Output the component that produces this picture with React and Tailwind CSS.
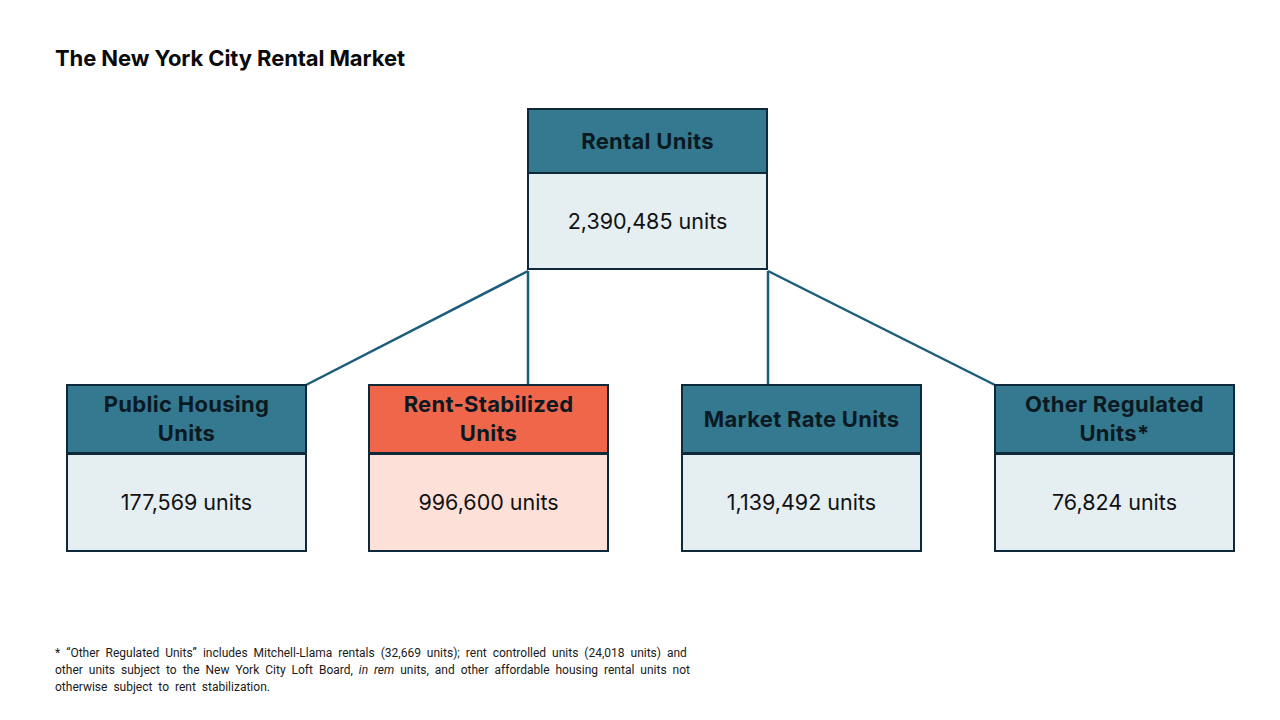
import React from 'react';

const teal = 'bg-[#34798f]';

const TopBox = () => (
  <div className="ml-[527px] w-[241px] border-2 border-[#0e2a3a]">
    <div className={`${teal} h-[62px] flex items-center justify-center text-[22px] font-bold text-[#0b1a22] tracking-[0.3px]`}>
      Rental Units
    </div>
    <div className="h-[96px] border-t-2 border-[#0e2a3a] bg-[#e5eef1] flex items-center justify-center text-[21.5px] text-[#111]">
      2,390,485 units
    </div>
  </div>
);

const UnitBox = ({ title, value, head, body, className }) => (
  <div className={`w-[241px] border-2 border-[#0e2a3a] ${className || ''}`}>
    <div className={`${head} h-[66px] flex items-center justify-center text-center text-[22px] leading-[29px] font-bold text-[#0b1a22] tracking-[0.3px] px-1`}>
      {title}
    </div>
    <div className={`${body} h-[98px] border-t-[3px] border-[#0e2a3a] flex items-center justify-center text-[21.5px] text-[#111]`}>
      {value}
    </div>
  </div>
);

const App = () => (
  <div
    className="relative w-[1280px] h-[720px] bg-white overflow-hidden"
    style={{ fontFamily: 'Inter, "Liberation Sans", sans-serif' }}
  >
    <svg className="absolute inset-0 pointer-events-none" width="1280" height="720">
      <g stroke="#1b5d7b" strokeWidth="2.5" fill="none">
        <line x1="528" y1="271" x2="306" y2="385" />
        <line x1="528" y1="271" x2="528" y2="385" />
        <line x1="768" y1="271" x2="768" y2="385" />
        <line x1="768" y1="271" x2="995" y2="385" />
      </g>
    </svg>

    <div className="pt-[45px] pl-[55px] text-[22px] leading-[26px] font-bold text-[#0a0a0a] tracking-[-0.1px]">
      The New York City Rental Market
    </div>

    <div className="relative mt-[37px]">
      <TopBox />
    </div>

    <div className="relative mt-[114px] flex pl-[66px]">
      <UnitBox title={<>Public Housing<br />Units</>} value="177,569 units" head={teal} body="bg-[#e5eef1]" />
      <UnitBox
        title={<>Rent-Stabilized<br />Units</>}
        value="996,600 units"
        head="bg-[#f0664b]"
        body="bg-[#fde1d9]"
        className="ml-[61px]"
      />
      <UnitBox title="Market Rate Units" value="1,139,492 units" head={teal} body="bg-[#e5eef1]" className="ml-[72px]" />
      <UnitBox
        title={<>Other Regulated<br />Units*</>}
        value="76,824 units"
        head={teal}
        body="bg-[#e5eef1]"
        className="ml-[72px]"
      />
    </div>

    <p
      className="mt-[93px] ml-[55px] whitespace-nowrap text-[12px] leading-[17px] text-[#1a1a1a] [word-spacing:3px]"
      style={{ fontFamily: 'Roboto, "Liberation Sans", sans-serif' }}
    >
      * “Other Regulated Units” includes Mitchell-Llama rentals (32,669 units); rent controlled units (24,018 units) and
      <br />
      other units subject to the New York City Loft Board, <i>in rem</i> units, and other affordable housing rental units not
      <br />
      otherwise subject to rent stabilization.
    </p>
  </div>
);

export default App;
